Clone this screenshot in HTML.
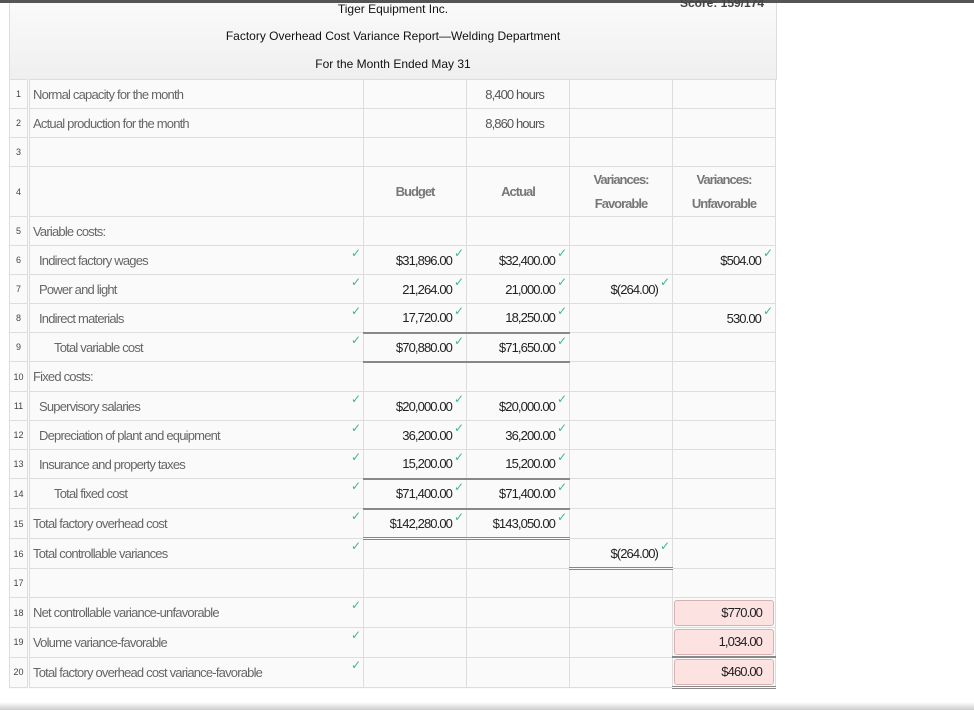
<!DOCTYPE html>
<html><head><meta charset="utf-8"><style>
body{margin:0;width:974px;height:717px;background:#fff;position:relative;overflow:hidden;font-family:"Liberation Sans",sans-serif;}
.topbar{position:absolute;left:0;top:0;width:974px;height:3px;background:#555;}
.hdr{position:absolute;left:9px;top:3px;width:766px;height:77px;background:linear-gradient(#fafafa,#efefef);border-left:1px solid #ddd;border-right:1px solid #ddd;font-size:12px;color:#111;}
.hdr div{position:absolute;width:766px;left:0;text-align:center;}
table{position:absolute;left:9px;top:79px;border-collapse:collapse;table-layout:fixed;background:#fafafa;}
td{border:1px solid #ddd;padding:0 6px;font-size:13px;color:#222;position:relative;white-space:nowrap;overflow:visible;letter-spacing:-0.9px;}
td.n{font-size:9px;color:#444;padding:0;text-align:center;border-right:3px double #ddd;letter-spacing:0;}
td.l{color:#666;padding-left:3px;letter-spacing:-0.8px;}
td.l.i{padding-left:9px;}
td.l.ii{padding-left:24px;}
td.r{text-align:right;padding-right:14px;}
td.h{text-align:center;font-weight:bold;color:#777;line-height:24px;letter-spacing:-1px;}
.ck{position:absolute;right:2px;top:0px;color:#3cb88a;font-size:12px;font-weight:bold;font-family:"DejaVu Sans",sans-serif;letter-spacing:0;}
.u1{border-bottom:2px solid #888;}
.u2{border-bottom:3px double #888;}
.pk{padding:1px;}
.pk div{background:#fde2e2;border:1px solid #d9b0b0;border-radius:3px;height:24px;line-height:24px;text-align:right;padding-right:11px;}
.bot{position:absolute;left:0;top:702px;width:974px;height:8px;background:linear-gradient(#fff,#ccc);}
.score{position:absolute;left:680px;top:-4px;font-weight:bold;font-size:12px;color:#444;}
</style></head><body>
<div class="topbar"></div>
<div class="hdr">
<div style="top:-1px">Tiger Equipment Inc.</div>
<div style="top:26px">Factory Overhead Cost Variance Report—Welding Department</div>
<div style="top:54px">For the Month Ended May 31</div>
</div>
<div class="score">Score: 159/174</div>
<table>
<colgroup><col style="width:19px"><col style="width:335px"><col style="width:103px"><col style="width:103px"><col style="width:103px"><col style="width:103px"></colgroup>
<tr style="height:29px"><td class="n">1</td><td class="l">Normal capacity for the month</td><td></td><td class="r" style="padding-right:25px;color:#555">8,400 hours</td><td></td><td></td></tr>
<tr style="height:29px"><td class="n">2</td><td class="l">Actual production for the month</td><td></td><td class="r" style="padding-right:25px;color:#555">8,860 hours</td><td></td><td></td></tr>
<tr style="height:29px"><td class="n">3</td><td class="l"></td><td></td><td></td><td></td><td></td></tr>
<tr style="height:50px"><td class="n">4</td><td class="l"></td><td class="h">Budget</td><td class="h">Actual</td><td class="h">Variances:<br>Favorable</td><td class="h">Variances:<br>Unfavorable</td></tr>
<tr style="height:29px"><td class="n">5</td><td class="l">Variable costs:</td><td></td><td></td><td></td><td></td></tr>
<tr style="height:29px"><td class="n">6</td><td class="l i">Indirect factory wages<span class="ck">✓</span></td><td class="r">$31,896.00<span class="ck">✓</span></td><td class="r">$32,400.00<span class="ck">✓</span></td><td></td><td class="r">$504.00<span class="ck">✓</span></td></tr>
<tr style="height:29px"><td class="n">7</td><td class="l i">Power and light<span class="ck">✓</span></td><td class="r">21,264.00<span class="ck">✓</span></td><td class="r">21,000.00<span class="ck">✓</span></td><td class="r">$(264.00)<span class="ck">✓</span></td><td></td></tr>
<tr style="height:29px"><td class="n">8</td><td class="l i">Indirect materials<span class="ck">✓</span></td><td class="r u1">17,720.00<span class="ck">✓</span></td><td class="r u1">18,250.00<span class="ck">✓</span></td><td></td><td class="r">530.00<span class="ck">✓</span></td></tr>
<tr style="height:29px"><td class="n">9</td><td class="l ii">Total variable cost<span class="ck">✓</span></td><td class="r u1">$70,880.00<span class="ck">✓</span></td><td class="r u1">$71,650.00<span class="ck">✓</span></td><td></td><td></td></tr>
<tr style="height:30px"><td class="n">10</td><td class="l">Fixed costs:</td><td></td><td></td><td></td><td></td></tr>
<tr style="height:29px"><td class="n">11</td><td class="l i">Supervisory salaries<span class="ck">✓</span></td><td class="r">$20,000.00<span class="ck">✓</span></td><td class="r">$20,000.00<span class="ck">✓</span></td><td></td><td></td></tr>
<tr style="height:29px"><td class="n">12</td><td class="l i">Depreciation of plant and equipment<span class="ck">✓</span></td><td class="r">36,200.00<span class="ck">✓</span></td><td class="r">36,200.00<span class="ck">✓</span></td><td></td><td></td></tr>
<tr style="height:29px"><td class="n">13</td><td class="l i">Insurance and property taxes<span class="ck">✓</span></td><td class="r u1">15,200.00<span class="ck">✓</span></td><td class="r u1">15,200.00<span class="ck">✓</span></td><td></td><td></td></tr>
<tr style="height:30px"><td class="n">14</td><td class="l ii">Total fixed cost<span class="ck">✓</span></td><td class="r u1">$71,400.00<span class="ck">✓</span></td><td class="r u1">$71,400.00<span class="ck">✓</span></td><td></td><td></td></tr>
<tr style="height:30px"><td class="n">15</td><td class="l">Total factory overhead cost<span class="ck">✓</span></td><td class="r u2">$142,280.00<span class="ck">✓</span></td><td class="r u2">$143,050.00<span class="ck">✓</span></td><td></td><td></td></tr>
<tr style="height:30px"><td class="n">16</td><td class="l">Total controllable variances<span class="ck">✓</span></td><td></td><td></td><td class="r u2">$(264.00)<span class="ck">✓</span></td><td></td></tr>
<tr style="height:29px"><td class="n">17</td><td class="l"></td><td></td><td></td><td></td><td></td></tr>
<tr style="height:30px"><td class="n">18</td><td class="l">Net controllable variance-unfavorable<span class="ck">✓</span></td><td></td><td></td><td></td><td class="pk"><div>$770.00</div></td></tr>
<tr style="height:29px"><td class="n">19</td><td class="l">Volume variance-favorable<span class="ck">✓</span></td><td></td><td></td><td></td><td class="pk u1"><div>1,034.00</div></td></tr>
<tr style="height:30px"><td class="n">20</td><td class="l">Total factory overhead cost variance-favorable<span class="ck">✓</span></td><td></td><td></td><td></td><td class="pk u2"><div>$460.00</div></td></tr>
</table>
<div class="bot"></div>
</body></html>
